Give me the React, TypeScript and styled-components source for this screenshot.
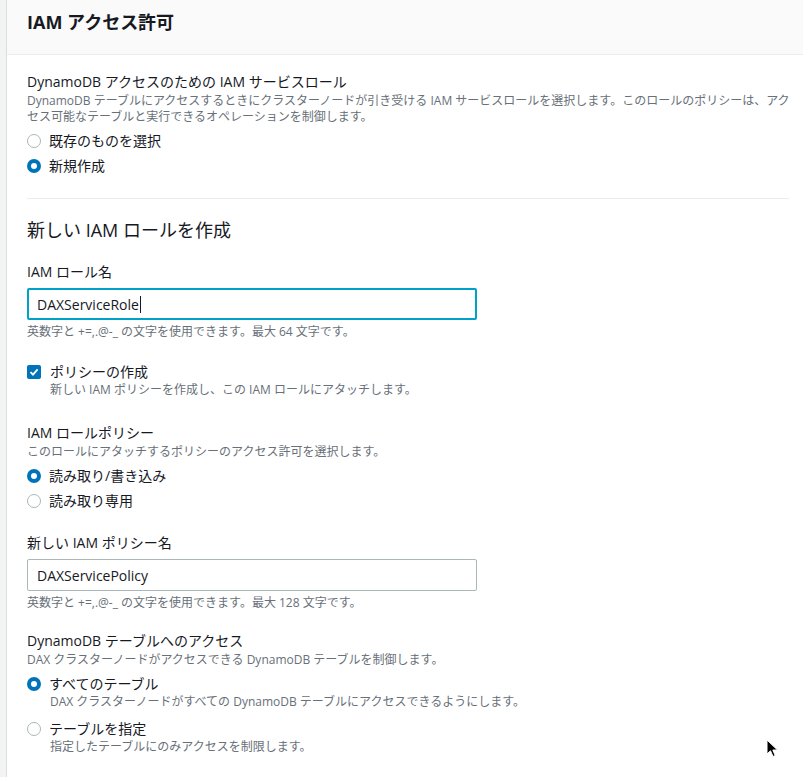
import React from "react";
import styled, { createGlobalStyle } from "styled-components";

const GlobalStyle = createGlobalStyle`
  html, body {
    margin: 0;
    padding: 0;
    background: #f2f3f3;
    overflow: hidden;
  }
  body {
    font-family: "Open Sans", "Noto Sans CJK JP", sans-serif;
    color: #16191f;
  }
`;

const Page = styled.div`
  height: 777px;
  padding-left: 6px;
  margin-right: -6px;
`;

const Panel = styled.section`
  height: 100%;
  background: #ffffff;
  border-left: 1px solid #d9dede;
`;

const PanelHeader = styled.header`
  height: 54px;
  display: flex;
  align-items: center;
  padding: 0 20px;
  background: #fafafa;
  border-bottom: 1px solid #eaeded;
`;

const PanelTitle = styled.h2`
  margin: 0;
  font-size: 18px;
  line-height: 22px;
  font-weight: 700;
  margin-top: -10px;
`;

const PanelBody = styled.div`
  padding: 16px 20px 0;
  display: flex;
  flex-direction: column;
`;

const Field = styled.div<{ $top?: number }>`
  display: flex;
  flex-direction: column;
  margin-top: ${({ $top }) => $top ?? 0}px;
`;

const Label = styled.div`
  font-size: 14px;
  line-height: 22px;
`;

const Description = styled.div<{ $indent?: boolean; $wide?: boolean }>`
  font-size: 12px;
  line-height: 16px;
  color: #687078;
  padding-left: ${({ $indent }) => ($indent ? "23px" : "0")};
  margin-right: ${({ $wide }) => ($wide ? "-7px" : "0")};
`;

const Options = styled.div<{ $gap?: number }>`
  display: flex;
  flex-direction: column;
  gap: ${({ $gap }) => $gap ?? 5}px;
  margin-top: 6px;
`;

const OptionRow = styled.label`
  display: flex;
  align-items: center;
  gap: 8px;
  font-size: 14px;
  line-height: 20px;
`;

const RadioDot = styled.span<{ $checked?: boolean }>`
  width: 14px;
  height: 14px;
  box-sizing: border-box;
  border-radius: 50%;
  flex-shrink: 0;
  background: #ffffff;
  border: ${({ $checked }) => ($checked ? "4px solid #0073bb" : "1.5px solid #aab7b8")};
`;

const CheckBox = styled.span`
  width: 14px;
  height: 14px;
  border-radius: 2px;
  background: #0073bb;
  display: flex;
  align-items: center;
  justify-content: center;
  flex-shrink: 0;
  margin-right: 1px;
`;

const Divider = styled.hr`
  border: none;
  border-top: 1px solid #eaeded;
  margin: 22px 0 0;
`;

const SubHeading = styled.h3`
  margin: 19px 0 0;
  font-size: 18px;
  line-height: 24px;
  font-weight: 400;
`;

const TextInput = styled.div<{ $focused?: boolean }>`
  width: 450px;
  height: 32px;
  box-sizing: border-box;
  margin-top: 5px;
  display: flex;
  align-items: center;
  padding-left: ${({ $focused }) => ($focused ? "8px" : "9px")};
  font-size: 14px;
  border-radius: 2px;
  border: ${({ $focused }) => ($focused ? "2px solid #00a1c9" : "1px solid #aab7b8")};
`;

const Caret = styled.span`
  width: 1px;
  height: 17px;
  background: #16191f;
  margin-left: 1px;
`;

const Hint = styled.div`
  margin-top: 4px;
  font-size: 12px;
  line-height: 16px;
  color: #687078;
`;

const OptionBlock = styled.div`
  display: flex;
  flex-direction: column;
`;

const Cursor = styled.svg`
  position: absolute;
  left: 766px;
  top: 739px;
`;

const Radio: React.FC<{ label: string; checked?: boolean; desc?: string }> = ({ label, checked, desc }) => (
  <OptionBlock>
    <OptionRow>
      <RadioDot $checked={checked} />
      {label}
    </OptionRow>
    {desc && <Description $indent>{desc}</Description>}
  </OptionBlock>
);

export default function App() {
  return (
    <>
      <GlobalStyle />
      <Page>
        <Panel>
          <PanelHeader>
            <PanelTitle>IAM アクセス許可</PanelTitle>
          </PanelHeader>
          <PanelBody>
            <Field>
              <Label>DynamoDB アクセスのための IAM サービスロール</Label>
              <Description $wide>
                DynamoDB テーブルにアクセスするときにクラスターノードが引き受ける IAM サービスロールを選択します。このロールのポリシーは、アク<wbr />セス可能なテーブルと実行できるオペレーションを制御します。
              </Description>
              <Options>
                <Radio label="既存のものを選択" />
                <Radio label="新規作成" checked />
              </Options>
            </Field>

            <Divider />
            <SubHeading>新しい IAM ロールを作成</SubHeading>

            <Field $top={19}>
              <Label>IAM ロール名</Label>
              <TextInput $focused>
                DAXServiceRole
                <Caret />
              </TextInput>
              <Hint>英数字と +=,.@-_ の文字を使用できます。最大 64 文字です。</Hint>
            </Field>

            <Field $top={22}>
              <OptionRow>
                <CheckBox>
                  <svg width="10" height="10" viewBox="0 0 10 10">
                    <path d="M1.5 5.2 L4 7.6 L8.6 2.4" fill="none" stroke="#fff" strokeWidth="1.8" />
                  </svg>
                </CheckBox>
                ポリシーの作成
              </OptionRow>
              <Description $indent>新しい IAM ポリシーを作成し、この IAM ロールにアタッチします。</Description>
            </Field>

            <Field $top={24}>
              <Label>IAM ロールポリシー</Label>
              <Description>このロールにアタッチするポリシーのアクセス許可を選択します。</Description>
              <Options>
                <Radio label="読み取り/書き込み" checked />
                <Radio label="読み取り専用" />
              </Options>
            </Field>

            <Field $top={21}>
              <Label>新しい IAM ポリシー名</Label>
              <TextInput>DAXServicePolicy</TextInput>
              <Hint>英数字と +=,.@-_ の文字を使用できます。最大 128 文字です。</Hint>
            </Field>

            <Field $top={19}>
              <Label>DynamoDB テーブルへのアクセス</Label>
              <Description>DAX クラスターノードがアクセスできる DynamoDB テーブルを制御します。</Description>
              <Options $gap={9}>
                <Radio
                  label="すべてのテーブル"
                  checked
                  desc="DAX クラスターノードがすべての DynamoDB テーブルにアクセスできるようにします。"
                />
                <Radio label="テーブルを指定" desc="指定したテーブルにのみアクセスを制限します。" />
              </Options>
            </Field>
          </PanelBody>
        </Panel>
      </Page>
      <Cursor width="14" height="20" viewBox="0 0 14 20">
        <path d="M1 1 L1 15 L4.5 11.8 L7 17.5 L9.2 16.5 L6.8 11 L11.5 11 Z" fill="#000" stroke="#fff" strokeWidth="1" />
      </Cursor>
    </>
  );
}
